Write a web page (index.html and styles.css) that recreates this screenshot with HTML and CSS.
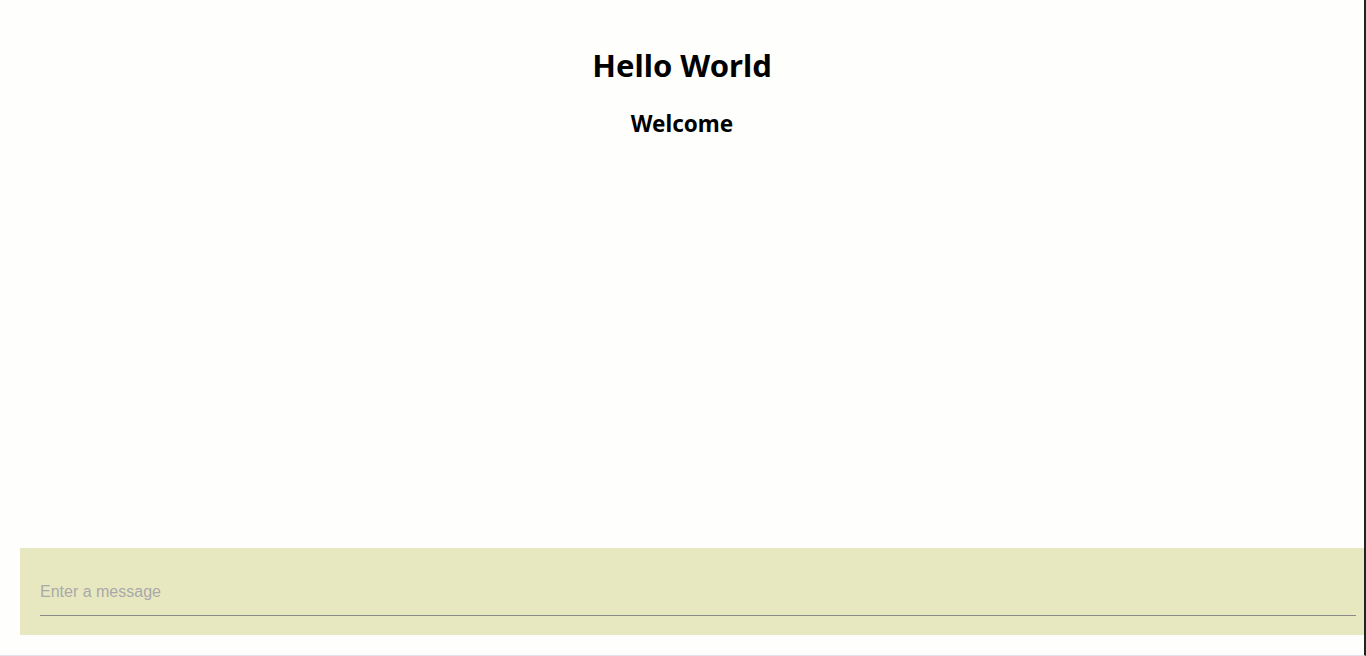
FILE: index.html
```html
<!DOCTYPE html>
<html>
<head>
<meta charset="utf-8">
<link rel="stylesheet" href="styles.css">
</head>
<body>
<div class="page">
  <header class="hero">
    <h1 class="title">Hello World</h1>
    <h3 class="subtitle">Welcome</h3>
  </header>
  <main class="spacer"></main>
  <footer class="composer">
    <div class="field">
      <input class="message" type="text" placeholder="Enter a message">
    </div>
  </footer>
</div>
</body>
</html>
```
FILE: styles.css
```css
html, body {
  margin: 0;
  padding: 0;
  background: #fefefc;
  height: 100%;
  overflow: hidden;
}
.page {
  height: 656px;
  display: flex;
  flex-direction: column;
  font-family: "Noto Sans", "Open Sans", sans-serif;
  color: #000;
  border-right: 2px solid #222;
  border-bottom: 1px solid #e2e2ea;
  box-sizing: border-box;
}
.hero {
  display: flex;
  flex-direction: column;
  align-items: center;
  padding-top: 44px;
}
.title {
  margin: 0;
  font-size: 31px;
  font-weight: 700;
  line-height: 42px;
}
.subtitle {
  margin: 23px 0 0;
  font-size: 22.5px;
  font-weight: 700;
  line-height: 30px;
}
.spacer {
  flex: 1;
}
.composer {
  margin: 0 0 20px 20px;
  height: 87px;
  background: #e8e8c0;
  padding: 0 8px 0 20px;
  display: flex;
  align-items: flex-end;
}
.field {
  flex: 1;
  padding-bottom: 19px;
}
.message {
  display: block;
  width: 100%;
  box-sizing: border-box;
  border: none;
  border-bottom: 1px solid #8a8a8a;
  background: transparent;
  font-family: "Liberation Sans", Arial, sans-serif;
  font-size: 16px;
  color: #333;
  padding: 0 0 12px;
  height: 35px;
  outline: none;
}
.message::placeholder {
  color: #a9a9a9;
}
```
